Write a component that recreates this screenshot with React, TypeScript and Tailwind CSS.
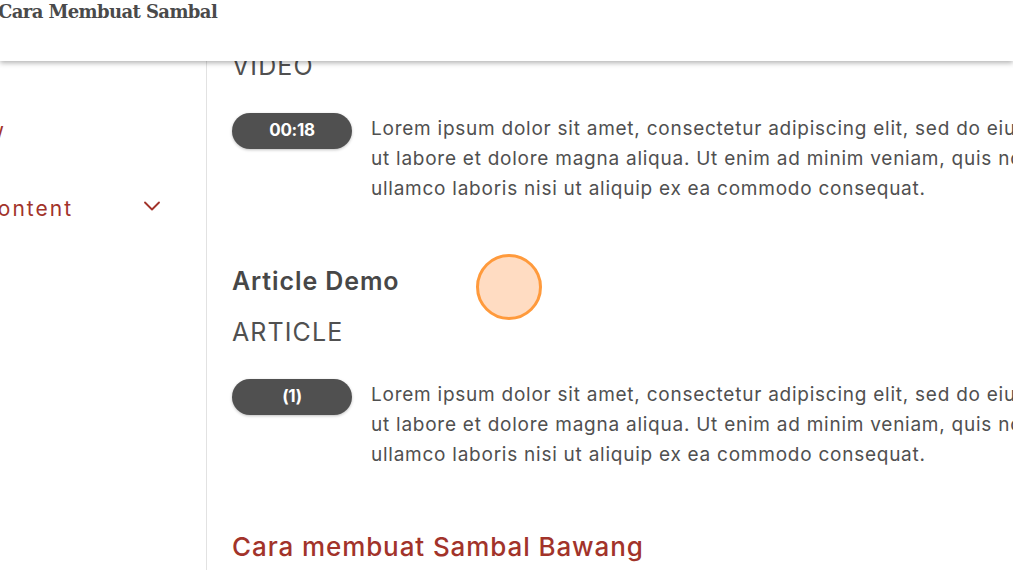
import { ChevronDown } from "lucide-react";

const lorem = [
  "Lorem ipsum dolor sit amet, consectetur adipiscing elit, sed do eiusmod tempor incididunt",
  "ut labore et dolore magna aliqua. Ut enim ad minim veniam, quis nostrud exercitation",
  "ullamco laboris nisi ut aliquip ex ea commodo consequat.",
];

function Entry({ badge }: { badge: string }) {
  return (
    <div className="flex items-start gap-[19px]">
      <span className="mt-[-1px] flex h-[36px] w-[120px] shrink-0 items-center justify-center rounded-full bg-[#505050] text-[17px] font-bold tracking-[-0.3px] text-white shadow-[0_1px_3px_rgba(0,0,0,0.25)]">
        {badge}
      </span>
      <p className="whitespace-nowrap text-[19px] leading-[30px] tracking-[0.75px] text-[#505050]">
        {lorem.map((line) => (
          <span key={line} className="block">
            {line}
          </span>
        ))}
      </p>
    </div>
  );
}

export default function App() {
  return (
    <div
      className="relative h-[570px] w-[1013px] overflow-hidden bg-white"
      style={{ fontFamily: "Inter, 'Noto Sans', sans-serif" }}
    >
      <header className="absolute left-0 right-0 top-0 z-10 h-[61px] bg-white shadow-[0_2px_5px_rgba(0,0,0,0.3)]">
        <h1
          className="ml-[-2px] mt-[-2px] text-[18px] font-bold tracking-[-0.6px] text-[#4a4a4a]"
          style={{ fontFamily: "'DejaVu Serif', serif" }}
        >
          Cara Membuat Sambal
        </h1>
      </header>

      <div className="flex h-full">
        <aside className="w-[207px] shrink-0 border-r border-[#e2e2e2] pt-[117px] text-[21px] tracking-[2px] text-[#a2332a]">
          <div className="flex w-[6px] justify-end leading-[28px]">
            <span className="whitespace-nowrap">Overview</span>
          </div>
          <div className="mt-[50px] flex items-center leading-[28px]">
            <div className="flex w-[73px] shrink-0 justify-end">
              <span className="whitespace-nowrap">Course Content</span>
            </div>
            <ChevronDown size={28} strokeWidth={1.6} className="ml-[65px] mt-[-6px] shrink-0" />
          </div>
        </aside>

        <main className="flex-1 pl-[25px] pt-[50px] text-[#505050]">
          <div className="text-[25px] leading-[32px] tracking-[1.1px]">VIDEO</div>
          <div className="mt-[32px]">
            <Entry badge="00:18" />
          </div>

          <h2 className="mt-[61px] text-[25px] font-semibold leading-[32px] tracking-[0.9px] text-[#474747]">
            Article Demo
          </h2>
          <div className="mt-[19px] text-[25px] leading-[32px] tracking-[1.1px]">ARTICLE</div>
          <div className="mt-[32px]">
            <Entry badge="(1)" />
          </div>

          <h2 className="mt-[60px] text-[26px] font-medium leading-[34px] tracking-[0.9px] text-[#a2332a]">
            Cara membuat Sambal Bawang
          </h2>
        </main>
      </div>

      <div className="absolute left-[476px] top-[254px] z-20 h-[66px] w-[66px] rounded-full border-[3px] border-[#ff9a3c] bg-[#ffdcc2]" />
    </div>
  );
}
